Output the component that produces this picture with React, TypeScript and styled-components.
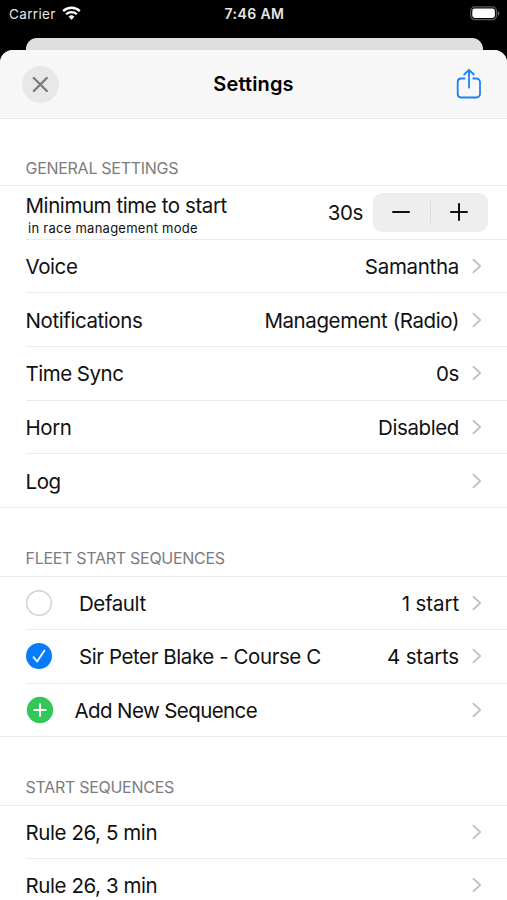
import React from 'react';
import styled, { createGlobalStyle } from 'styled-components';

const GlobalStyle = createGlobalStyle`
  * { box-sizing: border-box; }
  body {
    margin: 0;
    background: #fff;
    color: #111;
    font-family: Inter, "Liberation Sans", sans-serif;
    overflow: hidden;
  }
  button { font: inherit; color: inherit; border: 0; padding: 0; background: none; }
`;

const Screen = styled.div`
  width: 507px;
  height: 900px;
  overflow: hidden;
  background: #000;
  display: flex;
  flex-direction: column;
`;

const StatusBar = styled.div`
  flex: none;
  height: 38px;
  padding: 0 7px 10px 9px;
  display: grid;
  grid-template-columns: 1fr auto 1fr;
  align-items: center;
  color: #e6e6e6;
  font-size: 13.5px;
  line-height: 28px;
`;

const Carrier = styled.div`
  display: flex;
  align-items: center;
  gap: 6px;
  letter-spacing: 0.35px;
  svg { margin-top: -2px; }
`;

const Clock = styled.div`
  font-weight: 600;
  font-size: 14px;
  letter-spacing: 0.4px;
`;

const Battery = styled.svg`
  justify-self: end;
  margin-top: -1px;
`;

const BackSheet = styled.div`
  flex: none;
  height: 12px;
  margin: 0 24px 0 26px;
  background: #dfdfdf;
  border-radius: 11px 11px 0 0;
`;

const Sheet = styled.main`
  flex: 1;
  min-height: 0;
  background: #fff;
  border-radius: 13px 13px 0 0;
  overflow: hidden;
`;

const NavBar = styled.header`
  height: 69px;
  padding: 0 25px 0 22px;
  background: #f7f7f7;
  border-bottom: 1px solid #e9e9e9;
  display: grid;
  grid-template-columns: 1fr auto 1fr;
  align-items: center;
`;

const Title = styled.h1`
  margin: 0;
  padding-left: 3px;
  color: #000;
  font-size: 20px;
  font-weight: 600;
  letter-spacing: 0.15px;
`;

const CloseButton = styled.button`
  width: 37px;
  height: 37px;
  border-radius: 50%;
  background: #e8e8e9;
  display: grid;
  place-items: center;
`;

const ShareButton = styled.button`
  justify-self: end;
  display: grid;
`;

const SectionTitle = styled.h2<{ $height: number; $bottom?: number }>`
  margin: 0;
  height: ${(p) => p.$height}px;
  padding: 0 0 ${(p) => p.$bottom ?? 8}px 25.5px;
  display: flex;
  align-items: flex-end;
  border-bottom: 1px solid #ebebeb;
  color: #7c7c80;
  font-size: 16px;
  font-weight: 400;
  line-height: 20px;
  letter-spacing: -0.28px;
`;

const List = styled.div<{ $rowHeight: number }>`
  display: grid;
  grid-auto-rows: ${(p) => p.$rowHeight}px;
`;

const Row = styled.div`
  margin-left: 26px;
  padding-right: 25px;
  display: flex;
  align-items: center;
  border-bottom: 1px solid #ebebeb;
  font-size: 20.5px;
  line-height: 26px;
  white-space: nowrap;

  &:last-child {
    margin-left: 0;
    padding-left: 26px;
  }
`;

const Label = styled.span<{ $track?: number; $gap?: number }>`
  letter-spacing: ${(p) => p.$track ?? -0.42}px;
  margin-left: ${(p) => p.$gap ?? -0.5}px;
  padding-top: 2px;
`;

const Value = styled.span<{ $track?: number }>`
  margin-left: auto;
  padding-top: 2px;
  letter-spacing: ${(p) => p.$track ?? -0.4}px;
`;

const ChevronIcon = styled.svg<{ $push?: boolean }>`
  flex: none;
  margin-left: ${(p) => (p.$push ? 'auto' : '13px')};
`;

const Stack = styled.div`
  display: flex;
  flex-direction: column;
`;

const Hint = styled.span`
  margin: -1px 0 -5px 2px;
  font-size: 13px;
  line-height: 20px;
  letter-spacing: 0.26px;
`;

const Stepper = styled.div`
  flex: none;
  width: 115px;
  height: 39px;
  margin: 0 -6px 0 10px;
  border-radius: 9px;
  background: #eeeeef;
  display: grid;
  grid-template-columns: 1fr 1px 1fr;
  align-items: center;
`;

const StepButton = styled.button`
  display: grid;
  place-items: center;
  padding-right: 2px;
`;

const StepDivider = styled.span`
  height: 22px;
  background: #dcdcde;
`;

function Chevron({ push }: { push?: boolean }) {
  return (
    <ChevronIcon $push={push} width="10" height="16" viewBox="0 0 10 16" fill="none">
      <path d="M1.5 1.7 8.2 8 1.5 14.3" stroke="#c4c4c6" strokeWidth="2" strokeLinecap="round" strokeLinejoin="round" />
    </ChevronIcon>
  );
}

function StatusDot({ kind }: { kind: 'empty' | 'checked' | 'add' }) {
  if (kind === 'empty') {
    return (
      <svg width="26" height="26" viewBox="0 0 26 26" fill="none">
        <circle cx="13" cy="13" r="12.3" stroke="#d0d0d2" strokeWidth="1.4" />
      </svg>
    );
  }
  if (kind === 'checked') {
    return (
      <svg width="26" height="26" viewBox="0 0 26 26" fill="none">
        <circle cx="13" cy="13" r="13" fill="#057bfd" />
        <path d="m7.5 14.2 3.6 4.3 7.4-11" stroke="#fff" strokeWidth="1.8" strokeLinecap="round" strokeLinejoin="round" />
      </svg>
    );
  }
  return (
    <svg width="28" height="28" viewBox="0 0 28 28" fill="none">
      <circle cx="14" cy="14" r="13.2" fill="#33c759" />
      <path d="M14 8.3v11.4M8.3 14h11.4" stroke="#fff" strokeWidth="2" strokeLinecap="round" />
    </svg>
  );
}

export default function App() {
  return (
    <Screen>
      <GlobalStyle />
      <StatusBar>
        <Carrier>
          <span>Carrier</span>
          <svg width="19" height="14" viewBox="0 0 19 14" fill="none" stroke="#fff">
            <path d="M1.2 5.1a12 12 0 0 1 16.6 0" strokeWidth="2.3" />
            <path d="M4.1 8.2a7.8 7.8 0 0 1 10.8 0" strokeWidth="2.2" />
            <path d="M9.5 13.7 6.6 10.7a4.2 4.2 0 0 1 5.8 0Z" fill="#fff" stroke="none" />
          </svg>
        </Carrier>
        <Clock>7:46 AM</Clock>
        <Battery width="30" height="15" viewBox="0 0 30 15">
          <rect x="0.7" y="0.9" width="25.8" height="12.8" rx="4" fill="none" stroke="#5b5b5b" strokeWidth="1.2" />
          <rect x="2.3" y="2.6" width="22.6" height="9.4" rx="2.4" fill="#fff" />
          <path d="M27.8 5v4.6c1-.4 1.6-1.3 1.6-2.3S28.8 5.4 27.8 5Z" fill="#686868" />
        </Battery>
      </StatusBar>
      <BackSheet />
      <Sheet>
        <NavBar>
          <CloseButton aria-label="Close">
            <svg width="17" height="17" viewBox="0 0 17 17">
              <path d="m1.8 2 13 13M14.800 2l-13 13" stroke="#7c7c80" strokeWidth="2.4" strokeLinecap="round" />
            </svg>
          </CloseButton>
          <Title>Settings</Title>
          <ShareButton aria-label="Share">
            <svg width="26" height="32" viewBox="0 0 26 32" fill="none" stroke="#1b82f2" strokeWidth="1.8" strokeLinecap="round" strokeLinejoin="round">
              <path d="M8.5 10.5H5A3.500 3.500 0 0 0 1.700 14v12A3.500 3.500 0 0 0 5 29.500h15.500a3.500 3.500 0 0 0 3.500-3.500V14a3.500 3.500 0 0 0-3.500-3.500h-3.300" />
              <path d="M13 19.500V2M8.200 6.500 13 1.800l4.800 4.700" />
            </svg>
          </ShareButton>
        </NavBar>

        <SectionTitle $height={67} $bottom={7}>GENERAL SETTINGS</SectionTitle>
        <List $rowHeight={53.65}>
          <Row>
            <Stack>
              <Label>Minimum time to start</Label>
              <Hint>in race management mode</Hint>
            </Stack>
            <Value>30s</Value>
            <Stepper>
              <StepButton aria-label="Decrease">
                <svg width="18" height="18" viewBox="0 0 18 18">
                  <path d="M1 9h16" stroke="#111" strokeWidth="2" strokeLinecap="round" />
                </svg>
              </StepButton>
              <StepDivider />
              <StepButton aria-label="Increase">
                <svg width="18" height="18" viewBox="0 0 18 18">
                  <path d="M1 9h16M9 1v16" stroke="#111" strokeWidth="2" strokeLinecap="round" />
                </svg>
              </StepButton>
            </Stepper>
          </Row>
          <Row><Label>Voice</Label><Value $track={-0.3}>Samantha</Value><Chevron /></Row>
          <Row><Label>Notifications</Label><Value>Management (Radio)</Value><Chevron /></Row>
          <Row><Label $track={-0.5}>Time Sync</Label><Value>0s</Value><Chevron /></Row>
          <Row><Label>Horn</Label><Value>Disabled</Value><Chevron /></Row>
          <Row><Label>Log</Label><Chevron push /></Row>
        </List>

        <SectionTitle $height={69.1}>FLEET START SEQUENCES</SectionTitle>
        <List $rowHeight={53.3}>
          <Row><StatusDot kind="empty" /><Label $gap={27}>Default</Label><Value $track={-0.1}>1 start</Value><Chevron /></Row>
          <Row><StatusDot kind="checked" /><Label $gap={27}>Sir Peter Blake - Course C</Label><Value $track={-0.2}>4 starts</Value><Chevron /></Row>
          <Row><StatusDot kind="add" /><Label $gap={20.5} $track={-0.6}>Add New Sequence</Label><Chevron push /></Row>
        </List>

        <SectionTitle $height={69.1}>START SEQUENCES</SectionTitle>
        <List $rowHeight={53.3}>
          <Row><Label>Rule 26, 5 min</Label><Chevron push /></Row>
          <Row><Label>Rule 26, 3 min</Label><Chevron push /></Row>
        </List>
      </Sheet>
    </Screen>
  );
}
